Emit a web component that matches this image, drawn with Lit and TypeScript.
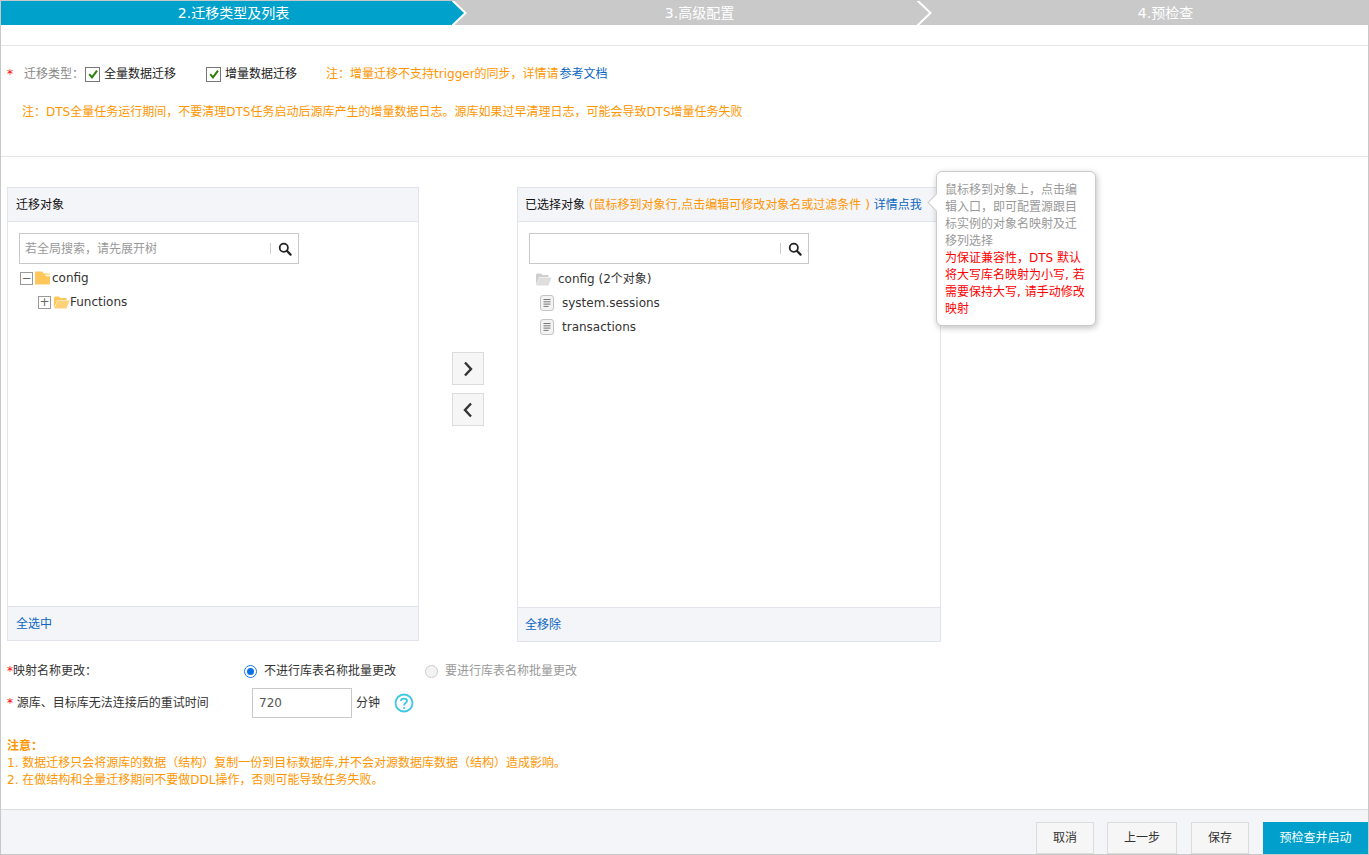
import { LitElement, html, css, svg } from 'lit';
import { customElement } from 'lit/decorators.js';

const searchIcon = html`<svg width="14" height="14" viewBox="0 0 14 14">
  <circle cx="5.8" cy="5.8" r="4.1" fill="none" stroke="#222" stroke-width="1.8"></circle>
  <path d="M8.8 8.8L12.6 12.6" stroke="#222" stroke-width="2.2" stroke-linecap="round"></path>
</svg>`;

const checkIcon = html`<span class="check"><svg width="12" height="12" viewBox="0 0 12 12">
  <path d="M2.2 6.2L5 9.4L10 2.6" fill="none" stroke="#2f7d0c" stroke-width="2"></path>
</svg></span>`;

const openFolder = (back: string, front: string) => svg`<svg width="17" height="14" viewBox="0 0 17 14">
  <path d="M1 13V2.5L2 1.5H6L7.5 3H13.5V5H4.5L1 13Z" fill=${back}></path>
  <path d="M4.6 5.4H16.6L13.4 13.4H1.2Z" fill=${front}></path>
</svg>`;

const closedFolder = html`<svg width="15" height="14" viewBox="0 0 15 14">
  <path d="M0 0.5H7L8.6 2.4H15V13.5H0Z" fill="#ffc75a"></path>
  <path d="M10.5 3.6H15V5.2H10.5Z" fill="#fff"></path>
</svg>`;

const fileIcon = html`<svg width="14" height="16" viewBox="0 0 14 16">
  <rect x="0.5" y="0.5" width="13" height="15" rx="2.5" fill="#f3f3f3" stroke="#c4c4c4"></rect>
  <path d="M3.5 4.5H10.5M3.5 6.8H10.5M3.5 9.1H10.5M3.5 11.4H8.5" stroke="#777" stroke-width="1"></path>
</svg>`;

@customElement('app-root')
export class AppRoot extends LitElement {
  static styles = css`
    :host {
      display: block;
      font-family: 'DejaVu Sans', 'Noto Sans CJK SC', sans-serif;
      font-size: 12px;
      line-height: 16px;
      color: #333;
    }
    .page {
      width: 1369px;
      height: 855px;
      box-sizing: border-box;
      border: 1px solid #c8c8c8;
      display: flex;
      flex-direction: column;
      background: #fff;
      overflow: hidden;
    }
    .steps {
      display: flex;
      height: 24px;
      background: #c9c9c9;
      color: #fff;
      font-size: 14px;
      flex: none;
    }
    .step {
      position: relative;
      display: flex;
      align-items: center;
      justify-content: center;
    }
    .step.s1 { width: 451px; background: #00a1cb; color: #00a1cb; }
    .step.s2 { width: 465px; color: #c9c9c9; }
    .step.s3 { flex: 1; }
    .step svg { position: absolute; top: 0; left: 100%; z-index: 1; }
    .step span { color: #fff; }
    .s1 span { margin-left: 14px; }
    .s2 span { margin-left: 30px; }
    .s3 span { margin-left: 46px; }
    .top {
      flex: none;
      margin-top: 20px;
      height: 110px;
      border-top: 1px solid #e5e5e5;
      border-bottom: 1px solid #e5e5e5;
    }
    .type-row {
      display: flex;
      align-items: center;
      height: 16px;
      margin-top: 20px;
      padding-left: 6px;
    }
    .star { color: #f00; }
    .type-label { color: #888; margin-left: 11px; margin-right: 1px; }
    .check {
      width: 13px;
      height: 13px;
      border: 1px solid #777;
      display: inline-flex;
      align-items: center;
      justify-content: center;
      margin-right: 4px;
      flex: none;
    }
    .opt { display: flex; align-items: center; margin-right: 30px; color: #222; }
    .note { color: #ff9600; }
    .type-row .note { margin-left: -1px; }
    .type-row .link { margin-left: 1px; }
    .link { color: #0a66c2; }
    .note-2 { margin: 22px 0 0 21px; }
    .transfer {
      flex: none;
      display: flex;
      margin-top: 30px;
      padding-left: 6px;
      position: relative;
    }
    .panel {
      border: 1px solid #e1e4ea;
      display: flex;
      flex-direction: column;
      box-sizing: border-box;
    }
    .panel.left { width: 412px; height: 454px; }
    .panel.right { width: 424px; height: 455px; }
    .panel-head {
      height: 33px;
      flex: none;
      display: flex;
      align-items: center;
      padding-left: 8px;
      background: #f4f5f9;
      border-bottom: 1px solid #e1e4ea;
      color: #111;
    }
    .panel-head .link { margin-left: 4px; }
    .panel-body { flex: 1; padding: 11px; }
    .panel-foot {
      height: 33px;
      flex: none;
      display: flex;
      align-items: center;
      padding-left: 8px;
      background: #f4f5f9;
      border-top: 1px solid #e1e4ea;
      color: #0a66c2;
    }
    .right .panel-head, .right .panel-foot { padding-left: 7px; }
    .search {
      width: 280px;
      height: 31px;
      box-sizing: border-box;
      border: 1px solid #c9c9c9;
      display: flex;
      align-items: center;
      color: #999;
      padding-left: 5px;
    }
    .search .ph { flex: 1; }
    .search .btn {
      width: 27px;
      height: 11px;
      border-left: 1px solid #ccc;
      display: flex;
      align-items: center;
      justify-content: center;
    }
    .tree { margin-top: 2px; }
    .node { display: flex; align-items: center; height: 24px; color: #333; }
    .node.child { padding-left: 18px; }
    .node.child .name { margin-left: 0; }
    .toggle {
      width: 11px;
      height: 11px;
      border: 1px solid #999;
      color: #666;
      display: flex;
      align-items: center;
      justify-content: center;
      margin: 0 2px 0 1px;
      flex: none;
    }
    .node svg { flex: none; }
    .node .name { margin-left: 2px; }
    .picked { margin-top: 3px; }
    .picked .node { padding-left: 6px; }
    .picked .name { margin-left: 6px; }
    .picked .file { padding-left: 11px; }
    .picked .file .name { margin-left: 8px; }
    .arrows {
      width: 98px;
      display: flex;
      flex-direction: column;
      align-items: center;
      gap: 8px;
      padding-top: 165px;
    }
    .arrow {
      width: 32px;
      height: 33px;
      box-sizing: border-box;
      border: 1px solid #dcdcdc;
      background: #f6f6f6;
      display: flex;
      align-items: center;
      justify-content: center;
    }
    .tip {
      position: absolute;
      left: 935px;
      top: -16px;
      width: 160px;
      height: 155px;
      box-sizing: border-box;
      padding: 10px 8px;
      background: #fff;
      border: 1px solid #ccc;
      border-radius: 6px;
      box-shadow: 1px 2px 6px rgba(0, 0, 0, 0.25);
      line-height: 17px;
      color: #999;
      z-index: 2;
    }
    .tip::before {
      content: '';
      position: absolute;
      left: -7px;
      top: 24px;
      width: 12px;
      height: 12px;
      background: #fff;
      border-left: 1px solid #ccc;
      border-bottom: 1px solid #ccc;
      transform: rotate(45deg);
    }
    .tip .warn { color: #f00; }
    .form-row { display: flex; align-items: center; flex: none; padding-left: 6px; }
    .map-row { margin-top: 20px; height: 18px; }
    .map-label { width: 237px; }
    .radio {
      width: 13px;
      height: 13px;
      box-sizing: border-box;
      border-radius: 50%;
      border: 1px solid #1e7be6;
      display: flex;
      align-items: center;
      justify-content: center;
      margin-right: 7px;
    }
    .radio i { width: 7px; height: 7px; border-radius: 50%; background: #0a6fe0; }
    .radio.off { border-color: #ccc; background: #f3f3f3; }
    .radio-text { margin-right: 29px; color: #333; }
    .radio-text.off { color: #999; }
    .retry-row { margin-top: 8px; height: 30px; }
    .retry-label { width: 245px; }
    .retry-input {
      width: 100px;
      height: 30px;
      box-sizing: border-box;
      border: 1px solid #c9c9c9;
      padding-left: 6px;
      display: flex;
      align-items: center;
      color: #555;
    }
    .unit { margin: 0 14px 0 4px; }
    .notice {
      flex: none;
      margin: 20px 0 0 6px;
      color: #ff9600;
      line-height: 17px;
    }
    .notice b { font-weight: 700; }
    .footer {
      margin-top: auto;
      flex: none;
      height: 45px;
      box-sizing: border-box;
      background: #f4f5f9;
      border-top: 1px solid #dcdcdc;
      display: flex;
      justify-content: flex-end;
      align-items: flex-end;
      gap: 14px;
    }
    .fbtn {
      height: 32px;
      box-sizing: border-box;
      border: 1px solid #dcdcdc;
      background: #f6f6f6;
      display: flex;
      align-items: center;
      justify-content: center;
      color: #333;
    }
    .fbtn.w58 { width: 58px; }
    .fbtn.w70 { width: 70px; }
    .fbtn.first { margin-right: -1px; }
    .fbtn.primary { width: 105px; background: #009fcc; border-color: #009fcc; color: #fff; }
  `;

  private chevron() {
    return html`<svg width="16" height="24" viewBox="0 0 16 24">
      <path d="M0 0L13 12L0 24Z" fill="currentColor"></path>
      <path d="M0 -1L13.5 12L0 25" fill="none" stroke="#fff" stroke-width="2"></path>
    </svg>`;
  }

  render() {
    return html`
      <div class="page">
        <div class="steps">
          <div class="step s1"><span>2.迁移类型及列表</span>${this.chevron()}</div>
          <div class="step s2"><span>3.高级配置</span>${this.chevron()}</div>
          <div class="step s3"><span>4.预检查</span></div>
        </div>

        <div class="top">
          <div class="type-row">
            <span class="star">*</span>
            <span class="type-label">迁移类型&#xFF1A;</span>
            <label class="opt">${checkIcon}全量数据迁移</label>
            <label class="opt">${checkIcon}增量数据迁移</label>
            <span class="note">注&#xFF1A;增量迁移不支持trigger的同步&#xFF0C;详情请<span class="link">参考文档</span></span>
          </div>
          <div class="note note-2">注&#xFF1A;DTS全量任务运行期间&#xFF0C;不要清理DTS任务启动后源库产生的增量数据日志。源库如果过早清理日志&#xFF0C;可能会导致DTS增量任务失败</div>
        </div>

        <div class="transfer">
          <div class="panel left">
            <div class="panel-head">迁移对象</div>
            <div class="panel-body">
              <div class="search"><span class="ph">若全局搜索&#xFF0C;请先展开树</span><span class="btn">${searchIcon}</span></div>
              <div class="tree">
                <div class="node">
                  <span class="toggle">−</span>${closedFolder}<span class="name">config</span>
                </div>
                <div class="node child">
                  <span class="toggle">+</span>${openFolder('#ffc75a', '#ffd27a')}<span class="name">Functions</span>
                </div>
              </div>
            </div>
            <div class="panel-foot">全选中</div>
          </div>

          <div class="arrows">
            <div class="arrow">
              <svg width="10" height="16" viewBox="0 0 10 16"><path d="M2 1.5L8 8L2 14.5" fill="none" stroke="#333" stroke-width="2.4"></path></svg>
            </div>
            <div class="arrow">
              <svg width="10" height="16" viewBox="0 0 10 16"><path d="M8 1.5L2 8L8 14.5" fill="none" stroke="#333" stroke-width="2.4"></path></svg>
            </div>
          </div>

          <div class="panel right">
            <div class="panel-head">已选择对象&nbsp;<span class="note">(鼠标移到对象行,点击编辑可修改对象名或过滤条件 )</span><span class="link">详情点我</span></div>
            <div class="panel-body">
              <div class="search"><span class="ph"></span><span class="btn">${searchIcon}</span></div>
              <div class="picked">
                <div class="node">${openFolder('#cfcfcf', '#dedede')}<span class="name">config (2个对象)</span></div>
                <div class="node file">${fileIcon}<span class="name">system.sessions</span></div>
                <div class="node file">${fileIcon}<span class="name">transactions</span></div>
              </div>
            </div>
            <div class="panel-foot">全移除</div>
          </div>

          <div class="tip">
            鼠标移到对象上&#xFF0C;点击编辑入口&#xFF0C;即可配置源跟目标实例的对象名映射及迁移列选择
            <div class="warn">为保证兼容性&#xFF0C;DTS 默认将大写库名映射为小写, 若需要保持大写, 请手动修改映射</div>
          </div>
        </div>

        <div class="form-row map-row">
          <span class="map-label"><span class="star">*</span>映射名称更改&#xFF1A;</span>
          <span class="radio"><i></i></span><span class="radio-text">不进行库表名称批量更改</span>
          <span class="radio off"></span><span class="radio-text off">要进行库表名称批量更改</span>
        </div>

        <div class="form-row retry-row">
          <span class="retry-label"><span class="star">*</span> 源库、目标库无法连接后的重试时间</span>
          <span class="retry-input">720</span>
          <span class="unit">分钟</span>
          <svg width="20" height="20" viewBox="0 0 20 20">
            <circle cx="10" cy="10" r="8.5" fill="none" stroke="#3cc8e6" stroke-width="1.8"></circle>
            <path d="M7 8C7 4.8 13 4.8 13 8C13 10 10 10 10 12.6" fill="none" stroke="#3cc8e6" stroke-width="1.8"></path>
            <circle cx="10" cy="15" r="1.1" fill="#3cc8e6"></circle>
          </svg>
        </div>

        <div class="notice">
          <b>注意&#xFF1A;</b><br />
          1. 数据迁移只会将源库的数据&#xFF08;结构&#xFF09;复制一份到目标数据库,并不会对源数据库数据&#xFF08;结构&#xFF09;造成影响。<br />
          2. 在做结构和全量迁移期间不要做DDL操作&#xFF0C;否则可能导致任务失败。
        </div>

        <div class="footer">
          <div class="fbtn w58 first">取消</div>
          <div class="fbtn w70">上一步</div>
          <div class="fbtn w58">保存</div>
          <div class="fbtn primary">预检查并启动</div>
        </div>
      </div>
    `;
  }
}
